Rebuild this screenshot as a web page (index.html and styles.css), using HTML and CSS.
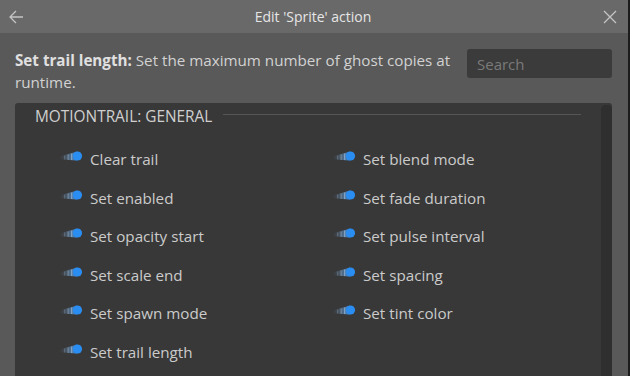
FILE: index.html
```html
<!DOCTYPE html>
<html lang="en">
<head>
    <meta charset="UTF-8">
    <title>Edit 'Sprite' action</title>
    <link rel="stylesheet" href="styles.css">
</head>
<body>
    <div class="dialog">
        <div class="title-bar">
            <svg class="title-icon" width="16" height="16" viewBox="0 0 16 16">
                <path d="M15 8H2M8 2L2 8l6 6" fill="none" stroke="#c4c4c4" stroke-width="1.3"/>
            </svg>
            <div class="title-text">Edit 'Sprite' action</div>
            <svg class="title-icon" width="16" height="16" viewBox="0 0 16 16">
                <path d="M2 2l12 12M14 2L2 14" fill="none" stroke="#c4c4c4" stroke-width="1.3"/>
            </svg>
        </div>

        <div class="desc-row">
            <div class="desc"><b>Set trail length:</b> Set the maximum number of ghost copies at runtime.</div>
            <div class="search">Search</div>
        </div>

        <div class="panel">
            <div class="panel-inner">
                <div class="group-header">
                    <span>MOTIONTRAIL: GENERAL</span>
                    <div class="group-line"></div>
                </div>
                <div class="action-grid">
                    <div class="action"><svg class="trail"><use href="#trail"/></svg>Clear trail</div>
                    <div class="action"><svg class="trail"><use href="#trail"/></svg>Set blend mode</div>
                    <div class="action"><svg class="trail"><use href="#trail"/></svg>Set enabled</div>
                    <div class="action"><svg class="trail"><use href="#trail"/></svg>Set fade duration</div>
                    <div class="action"><svg class="trail"><use href="#trail"/></svg>Set opacity start</div>
                    <div class="action"><svg class="trail"><use href="#trail"/></svg>Set pulse interval</div>
                    <div class="action"><svg class="trail"><use href="#trail"/></svg>Set scale end</div>
                    <div class="action"><svg class="trail"><use href="#trail"/></svg>Set spacing</div>
                    <div class="action"><svg class="trail"><use href="#trail"/></svg>Set spawn mode</div>
                    <div class="action"><svg class="trail"><use href="#trail"/></svg>Set tint color</div>
                    <div class="action"><svg class="trail"><use href="#trail"/></svg>Set trail length</div>
                </div>
            </div>
            <div class="scrollbar"><div class="thumb"></div></div>
        </div>
    </div>

    <!-- motion trail icon -->
    <svg width="0" height="0" style="position:absolute">
        <defs>
            <linearGradient id="trail-fade" x1="0" x2="1" y1="0" y2="0">
                <stop offset="0" stop-color="#404a54" stop-opacity="0"/>
                <stop offset="0.55" stop-color="#5a7692" stop-opacity="0.75"/>
                <stop offset="1" stop-color="#3d8fe6"/>
            </linearGradient>
            <symbol id="trail" viewBox="0 0 24 12">
                <path d="M0 7 C5 5, 11 3.5, 18 1.5 L18 10.5 C11 10, 5 9.5, 0 9 Z" fill="url(#trail-fade)"/>
                <rect x="5" y="5.5" width="1.3" height="4" fill="#7b8fa3" opacity="0.45"/>
                <rect x="8.5" y="4.5" width="1.3" height="5.5" fill="#86a2be" opacity="0.55"/>
                <rect x="12" y="3.5" width="1.3" height="6.5" fill="#9bbbdb" opacity="0.65"/>
                <circle cx="18.5" cy="6" r="4.6" fill="#2a8df2"/>
            </symbol>
        </defs>
    </svg>
</body>
</html>
```

FILE: styles.css
```css
body {
    margin: 0;
    padding: 0;
    background-color: #1c1c1c;
    font-family: "Open Sans", "Noto Sans", sans-serif;
    overflow: hidden;
}

.dialog {
    width: 628px;
    height: 376px;
    background-color: #595959;
    display: flex;
    flex-direction: column;
    overflow: hidden;
}

.title-bar {
    height: 33px;
    background-color: #696969;
    display: flex;
    align-items: center;
    padding: 0 10px 0 8px;
    flex-shrink: 0;
}

.title-text {
    flex: 1;
    text-align: center;
    color: #e6e6e6;
    font-size: 14px;
}

.title-icon {
    display: block;
}

.desc-row {
    display: flex;
    align-items: flex-start;
    gap: 8px;
    padding: 16px 16px 0 15px;
    height: 54px;
    flex-shrink: 0;
}

.desc {
    flex: 1;
    color: #d2d2d2;
    font-size: 15.2px;
    line-height: 22px;
}

.desc b {
    color: #e0e0e0;
}

.search {
    width: 135px;
    height: 29px;
    background-color: #3b3b3b;
    border-radius: 3px;
    color: #7a7a7a;
    font-size: 15px;
    line-height: 30px;
    padding-left: 10px;
}

.panel {
    margin: 0 16px 0 15px;
    flex: 1;
    background-color: #383838;
    border-radius: 3px 3px 0 0;
    display: flex;
}

.panel-inner {
    flex: 1;
}

.group-header {
    display: flex;
    align-items: center;
    gap: 11px;
    padding: 1px 20px 0 20px;
    height: 24px;
    color: #cfcfcf;
    font-size: 15.4px;
}

.group-line {
    flex: 1;
    height: 1px;
    margin-top: -4px;
    background-color: #555;
}

.action-grid {
    display: grid;
    grid-template-columns: 273px 1fr;
    grid-auto-rows: 38.5px;
    padding: 12px 0 0 44px;
}

.action {
    display: flex;
    align-items: center;
    gap: 7px;
    color: #cbcbcb;
    font-size: 15.2px;
}

.trail {
    width: 24px;
    height: 12px;
    margin-top: -6px;
}

.scrollbar {
    width: 11px;
    background-color: #333;
    margin-top: 2px;
    border-radius: 5px 5px 0 0;
}

.thumb {
    height: 100%;
    background-color: #2f2f2f;
    border-radius: 5px 5px 0 0;
}
```
